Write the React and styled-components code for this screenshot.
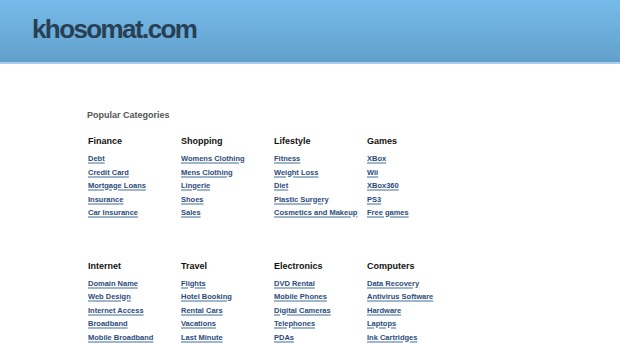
import React from 'react';
import styled, { createGlobalStyle } from 'styled-components';

const Global = createGlobalStyle`
  body {
    margin: 0;
    background: #fff;
    font-family: "Liberation Sans", Arial, sans-serif;
  }
`;

const Header = styled.div`
  height: 62px;
  background: linear-gradient(to bottom, #76bbea 0%, #62a0cc 100%);
  border-bottom: 2px solid #a7cfef;
  display: flex;
  align-items: center;
  padding-left: 32px;
`;

const Logo = styled.div`
  font-size: 26px;
  font-weight: bold;
  letter-spacing: -1.6px;
  color: #293f54;
  margin-top: -4px;
`;

const Content = styled.div`
  padding: 45px 0 0 87px;
`;

const Title = styled.div`
  font-size: 9px;
  line-height: 12px;
  font-weight: bold;
  color: #555;
`;

const Grid = styled.div`
  display: grid;
  grid-template-columns: repeat(4, 93px);
  row-gap: 40px;
  margin-top: 14px;
  padding-left: 1px;
`;

const Column = styled.div`
  display: flex;
  flex-direction: column;
`;

const Heading = styled.div`
  font-size: 9px;
  line-height: 12px;
  font-weight: bold;
  color: #111;
  margin-bottom: 5px;
`;

const Link = styled.a`
  font-size: 7.5px;
  line-height: 13.5px;
  font-weight: bold;
  color: #2b4b7c;
  text-decoration: underline;
  text-decoration-color: #9fb6cb;
  text-decoration-thickness: 2px;
  text-underline-offset: 1px;
  white-space: nowrap;
  align-self: flex-start;
`;

const groups = [
  ['Finance', ['Debt', 'Credit Card', 'Mortgage Loans', 'Insurance', 'Car Insurance']],
  ['Shopping', ['Womens Clothing', 'Mens Clothing', 'Lingerie', 'Shoes', 'Sales']],
  ['Lifestyle', ['Fitness', 'Weight Loss', 'Diet', 'Plastic Surgery', 'Cosmetics and Makeup']],
  ['Games', ['XBox', 'Wii', 'XBox360', 'PS3', 'Free games']],
  ['Internet', ['Domain Name', 'Web Design', 'Internet Access', 'Broadband', 'Mobile Broadband']],
  ['Travel', ['Flights', 'Hotel Booking', 'Rental Cars', 'Vacations', 'Last Minute']],
  ['Electronics', ['DVD Rental', 'Mobile Phones', 'Digital Cameras', 'Telephones', 'PDAs']],
  ['Computers', ['Data Recovery', 'Antivirus Software', 'Hardware', 'Laptops', 'Ink Cartridges']],
];

export default function App() {
  return (
    <>
      <Global />
      <Header>
        <Logo>khosomat.com</Logo>
      </Header>
      <Content>
        <Title>Popular Categories</Title>
        <Grid>
          {groups.map(([name, links]) => (
            <Column key={name}>
              <Heading>{name}</Heading>
              {links.map((l) => (
                <Link key={l} href="#">{l}</Link>
              ))}
            </Column>
          ))}
        </Grid>
      </Content>
    </>
  );
}
